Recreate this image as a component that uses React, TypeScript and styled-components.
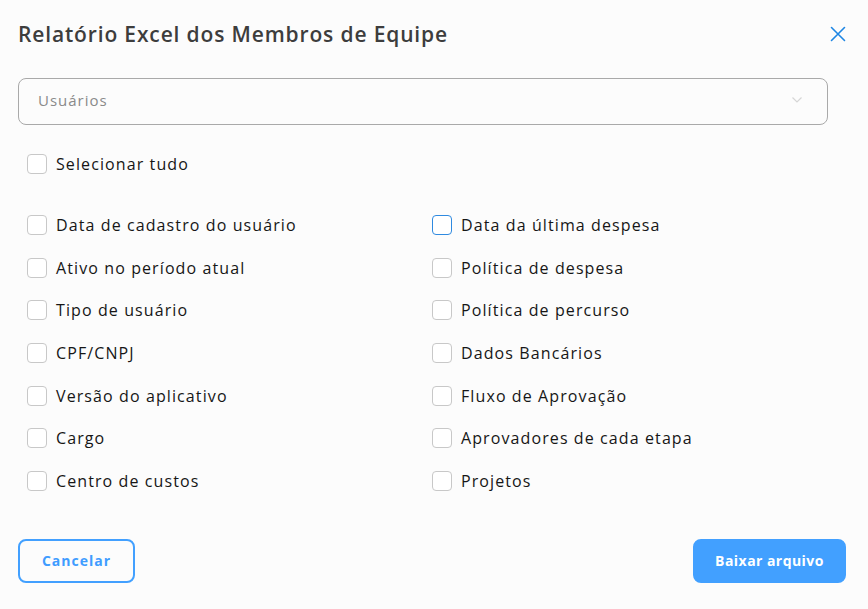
import React from "react";
import styled, { createGlobalStyle } from "styled-components";

const GlobalStyle = createGlobalStyle`
  html, body { margin: 0; padding: 0; background: #fcfcfc; }
  body { font-family: "Open Sans", "Liberation Sans", sans-serif; }
  * { box-sizing: border-box; }
`;

const Modal = styled.div`
  width: 868px;
  height: 609px;
  background: #fcfcfc;
  padding: 18px 22px 0 18px;
  display: flex;
  flex-direction: column;
`;

const Header = styled.div`
  display: flex;
  align-items: center;
  justify-content: space-between;
  height: 32px;
`;

const Title = styled.h1`
  margin: 0;
  font-size: 21px;
  font-weight: 600;
  color: #3d3d3d;
  letter-spacing: 0.85px;
`;

const CloseButton = styled.button`
  border: none;
  background: transparent;
  padding: 0;
  width: 18px;
  height: 18px;
  display: flex;
  align-items: center;
  justify-content: center;
  cursor: pointer;
  margin-right: -1px;
`;

const SelectBox = styled.div`
  margin-top: 28px;
  width: 810px;
  height: 47px;
  border: 1px solid #a9a9a9;
  border-radius: 8px;
  display: flex;
  align-items: center;
  justify-content: space-between;
  padding: 0 24px 3px 19px;
`;

const Placeholder = styled.span`
  font-size: 15px;
  color: #8a8a8a;
  letter-spacing: 1px;
`;

const Option = styled.label`
  display: flex;
  align-items: center;
  gap: 9px;
  height: 24px;
  font-size: 16px;
  letter-spacing: 1.1px;
  color: #161616;
  cursor: pointer;
`;

const Box = styled.span<{ $focused?: boolean }>`
  width: 20px;
  height: 20px;
  border-radius: 4px;
  border: 1px solid ${(p) => (p.$focused ? "#2f8ae0" : "#c8c8c8")};
  background: #fff;
  flex: none;
`;

const SelectAllRow = styled.div`
  margin-top: 27px;
  padding-left: 9px;
`;

const Grid = styled.div`
  margin-top: 37px;
  padding-left: 9px;
  display: grid;
  grid-template-columns: 405px 1fr;
  grid-auto-flow: column;
  grid-template-rows: repeat(7, 24px);
  row-gap: 18.67px;
`;

const Footer = styled.div`
  margin-top: 46px;
  display: flex;
  justify-content: space-between;
`;

const Button = styled.button<{ $primary?: boolean }>`
  height: 44px;
  border-radius: 8px;
  font-family: inherit;
  font-size: 14px;
  font-weight: 700;
  letter-spacing: ${(p) => (p.$primary ? "0.45px" : "1px")};
  padding: 0;
  border: 2px solid #42a0ff;
  background: ${(p) => (p.$primary ? "#42a0ff" : "transparent")};
  color: ${(p) => (p.$primary ? "#ffffff" : "#3f9cff")};
  width: ${(p) => (p.$primary ? "153px" : "117px")};
  cursor: pointer;
`;

const left = [
  "Data de cadastro do usuário",
  "Ativo no período atual",
  "Tipo de usuário",
  "CPF/CNPJ",
  "Versão do aplicativo",
  "Cargo",
  "Centro de custos",
];
const right = [
  "Data da última despesa",
  "Política de despesa",
  "Política de percurso",
  "Dados Bancários",
  "Fluxo de Aprovação",
  "Aprovadores de cada etapa",
  "Projetos",
];

export default function App() {
  return (
    <>
      <GlobalStyle />
      <Modal>
        <Header>
          <Title>Relatório Excel dos Membros de Equipe</Title>
          <CloseButton aria-label="Fechar">
            <svg width="16" height="16" viewBox="0 0 16 16">
              <path d="M1.5 1.5 L14.5 14.5 M14.5 1.5 L1.5 14.5" stroke="#1e86e3" strokeWidth="1.6" strokeLinecap="round" />
            </svg>
          </CloseButton>
        </Header>
        <SelectBox>
          <Placeholder>Usuários</Placeholder>
          <svg width="12" height="8" viewBox="0 0 12 8">
            <path d="M1.5 1.5 L6 6 L10.5 1.5" stroke="#d6d6d6" strokeWidth="1.2" fill="none" />
          </svg>
        </SelectBox>
        <SelectAllRow>
          <Option>
            <Box />
            Selecionar tudo
          </Option>
        </SelectAllRow>
        <Grid>
          {left.map((t) => (
            <Option key={t}>
              <Box />
              {t}
            </Option>
          ))}
          {right.map((t, i) => (
            <Option key={t}>
              <Box $focused={i === 0} />
              {t}
            </Option>
          ))}
        </Grid>
        <Footer>
          <Button>Cancelar</Button>
          <Button $primary>Baixar arquivo</Button>
        </Footer>
      </Modal>
    </>
  );
}
